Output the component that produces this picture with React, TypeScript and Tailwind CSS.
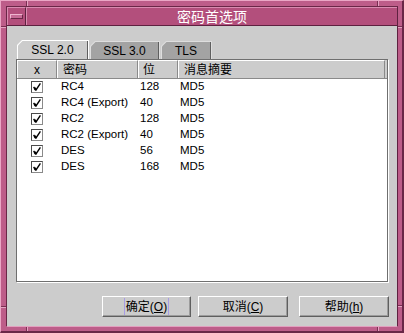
import React from "react";

const rows = [
  { name: "RC4", bits: "128" },
  { name: "RC4 (Export)", bits: "40" },
  { name: "RC2", bits: "128" },
  { name: "RC2 (Export)", bits: "40" },
  { name: "DES", bits: "56" },
  { name: "DES", bits: "168" },
];

function Check() {
  return (
    <div className="w-[12px] h-[12px] bg-white border-t border-l border-[#4a4a4a] border-r border-b border-r-[#8a8a8a] border-b-[#8a8a8a] flex items-center justify-center">
      <svg width="8" height="8" viewBox="0 0 8 8">
        <path d="M1 4.5 L3 7 L7 1" fill="none" stroke="#000" strokeWidth="1.4" strokeLinecap="square" />
        <path d="M1.5 5 L3 7" fill="none" stroke="#000" strokeWidth="2.2" />
      </svg>
    </div>
  );
}

function Tab({ label, selected, w }: { label: string; selected?: boolean; w: string }) {
  return (
    <div
      className={
        (selected ? "h-[19px] bg-white " : "h-[18px] bg-[#dedede] ") +
        w +
        " flex p-[1px] pb-0 [clip-path:polygon(5px_0,100%_0,100%_100%,0_100%,0_5px)]"
      }
    >
      <div
        className={
          (selected ? "bg-[#cccccc] " : "bg-[#a3a3a3] ") +
          "flex-1 flex items-center justify-center border-r border-[#5f5f5f] [clip-path:polygon(4.5px_0,100%_0,100%_100%,0_100%,0_4.5px)]"
        }
      >
        {label}
      </div>
    </div>
  );
}

function Button({ w, children, focus }: { w: string; children: React.ReactNode; focus?: boolean }) {
  return (
    <div
      className={
        w +
        " h-[21px] bg-[#cccccc] border-t border-l border-white border-b border-r border-b-[#5f5f5f] border-r-[#5f5f5f] shadow-[inset_-1px_-1px_0_#9c9c9c] flex items-center justify-center"
      }
    >
      {focus ? (
        <span className="inline-flex h-[17px] items-center border-x border-[#a89ce4] px-[1px]">{children}</span>
      ) : (
        <span className="inline-flex h-[17px] items-center">{children}</span>
      )}
    </div>
  );
}

export default function App() {
  return (
    <div className="relative w-[404px] h-[333px] overflow-hidden bg-[#bd5d89] border-t border-l border-t-[#eaa7c5] border-l-[#eaa7c5] border-r-2 border-b-2 border-r-[#6a2747] border-b-[#6a2747] pt-[5px] pl-[5px] pr-[4px] pb-[4px] font-['Liberation_Sans','Noto_Sans_CJK_SC',sans-serif] text-[12px] text-black">
      {/* frame resize notches */}
      <div className="absolute left-[25px] top-0 w-[2px] h-[5px] border-l border-[#7a2f52] bg-[#e6a3c2]" />
      <div className="absolute left-[376px] top-0 w-[2px] h-[5px] border-l border-[#7a2f52] bg-[#e6a3c2]" />
      <div className="absolute left-0 top-[25px] w-[5px] h-[2px] border-t border-[#7a2f52] bg-[#e6a3c2]" />
      <div className="absolute right-0 top-[25px] w-[4px] h-[2px] border-t border-[#7a2f52] bg-[#e6a3c2]" />
      <div className="absolute left-0 top-[305px] w-[5px] h-[2px] border-t border-[#7a2f52] bg-[#e6a3c2]" />
      <div className="absolute right-0 top-[304px] w-[4px] h-[2px] border-t border-[#7a2f52] bg-[#e6a3c2]" />
      <div className="absolute left-[25px] bottom-0 w-[2px] h-[4px] border-l border-[#7a2f52] bg-[#e6a3c2]" />
      <div className="absolute left-[376px] bottom-0 w-[2px] h-[4px] border-l border-[#7a2f52] bg-[#e6a3c2]" />

      <div className="flex flex-col h-full border border-t-[#6a2747] border-l-[#6a2747] border-b-[#e2a0bf] border-r-[#5e2140]">
        {/* title bar */}
        <div className="flex h-[19px] bg-[#b34f7c] border-b border-[#5e2140]">
          <div className="w-[19px] flex items-center justify-center border-t border-l border-[#d98cb0] border-r border-r-[#5e2140]">
            <div className="w-[13px] h-[5px] bg-[#c66c96] border-t border-l border-[#efb6cf] border-b border-r border-b-[#6a2747] border-r-[#6a2747]" />
          </div>
          <div className="flex-1 flex items-center justify-center border-t border-l border-[#d98cb0] text-white text-[14px] leading-none">
            密码首选项
          </div>
        </div>

        {/* content */}
        <div className="flex-1 flex flex-col bg-[#cccccc] pt-[14px] pl-[9px] pr-[9px] pb-[9px]">
          <div className="flex items-end h-[19px] pl-[1px]">
            <Tab label="SSL 2.0" selected w="w-[72px]" />
            <div className="w-[1px]" />
            <Tab label="SSL 3.0" w="w-[70px]" />
            <div className="w-[1px]" />
            <Tab label="TLS" w="w-[51px]" />
          </div>

          <div className="flex-1 flex flex-col bg-white border border-[#6f6f6f] shadow-[1px_1px_0_#ffffff]">
            <div className="flex h-[19px] bg-[#cccccc] border-b border-[#8a8a8a]">
              <div className="w-[40px] flex items-center justify-center border-t border-l border-white border-r border-r-[#8a8a8a]">x</div>
              <div className="w-[81px] flex items-center pl-[5px] border-t border-l border-white border-r border-r-[#8a8a8a]">密码</div>
              <div className="w-[40px] flex items-center pl-[4px] border-t border-l border-white border-r border-r-[#8a8a8a]">位</div>
              <div className="w-[207px] flex items-center pl-[5px] border-t border-l border-white border-r border-r-[#8a8a8a]">消息摘要</div>
            </div>
            {rows.map((r, i) => (
              <div key={i} className="flex h-[16px] items-center">
                <div className="w-[40px] flex justify-center">
                  <Check />
                </div>
                <div className="w-[81px] pl-[4px] text-[11.5px]">{r.name}</div>
                <div className="w-[40px] pl-[2px] text-[11.5px]">{r.bits}</div>
                <div className="pl-[2px] text-[11.5px]">MD5</div>
              </div>
            ))}
          </div>

          <div className="flex justify-end mt-[14px] mr-[-1px]">
            <Button w="w-[89px]" focus>
              确定(<span className="underline">O</span>)
            </Button>
            <div className="w-[7px]" />
            <Button w="w-[90px]">
              取消(<span className="underline">C</span>)
            </Button>
            <div className="w-[11px]" />
            <Button w="w-[90px]">
              帮助(<span className="underline">h</span>)
            </Button>
          </div>
        </div>
      </div>
    </div>
  );
}
